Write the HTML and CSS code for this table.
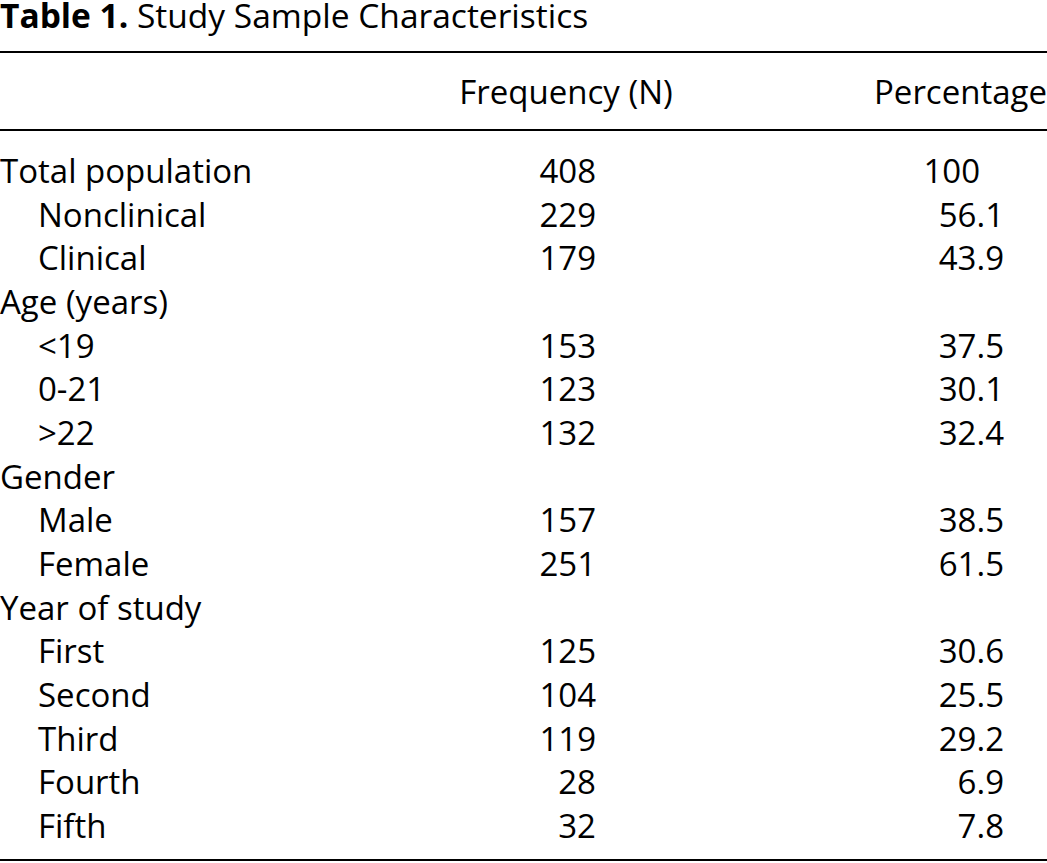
FILE: index.html
```html
<!DOCTYPE html>
<html>
<head>
<meta charset="utf-8">
<link rel="stylesheet" href="styles.css">
</head>
<body>
<div class="page">
  <div class="caption"><span class="label">Table 1.</span> Study Sample Characteristics</div>
  <table class="tbl">
    <thead>
      <tr><th class="c-name"></th><th class="c-freq">Frequency (N)</th><th class="c-pct">Percentage</th></tr>
    </thead>
    <tbody>
      <tr class="first"><td>Total population</td><td class="n">408</td><td class="p int">100</td></tr>
      <tr><td class="sub">Nonclinical</td><td class="n">229</td><td class="p">56.1</td></tr>
      <tr><td class="sub">Clinical</td><td class="n">179</td><td class="p">43.9</td></tr>
      <tr><td>Age (years)</td><td></td><td></td></tr>
      <tr><td class="sub">&lt;19</td><td class="n">153</td><td class="p">37.5</td></tr>
      <tr><td class="sub">0-21</td><td class="n">123</td><td class="p">30.1</td></tr>
      <tr><td class="sub">&gt;22</td><td class="n">132</td><td class="p">32.4</td></tr>
      <tr><td>Gender</td><td></td><td></td></tr>
      <tr><td class="sub">Male</td><td class="n">157</td><td class="p">38.5</td></tr>
      <tr><td class="sub">Female</td><td class="n">251</td><td class="p">61.5</td></tr>
      <tr><td>Year of study</td><td></td><td></td></tr>
      <tr><td class="sub">First</td><td class="n">125</td><td class="p">30.6</td></tr>
      <tr><td class="sub">Second</td><td class="n">104</td><td class="p">25.5</td></tr>
      <tr><td class="sub">Third</td><td class="n">119</td><td class="p">29.2</td></tr>
      <tr><td class="sub">Fourth</td><td class="n">28</td><td class="p">6.9</td></tr>
      <tr class="last"><td class="sub">Fifth</td><td class="n">32</td><td class="p">7.8</td></tr>
    </tbody>
  </table>
</div>
</body>
</html>
```
FILE: styles.css
```css
html, body {
  margin: 0;
  padding: 0;
  background: #fff;
}
body {
  font-family: "Open Sans", Lato, "Liberation Sans", sans-serif;
  color: #000;
}
.page {
  width: 1047px;
}
.caption {
  font-size: 33.5px;
  line-height: 30px;
  padding-top: 0;
  height: 51px;
  white-space: nowrap;
}
.caption .label {
  font-weight: 700;
}
.tbl {
  width: 1047px;
  border-collapse: collapse;
  font-size: 33px;
  border-top: 2px solid #000;
  border-bottom: 2px solid #000;
}
.tbl th {
  font-weight: 400;
  height: 76px;
  padding: 0;
  border-bottom: 2px solid #000;
  vertical-align: middle;
}
.tbl td {
  padding: 0;
  height: 43.67px;
  line-height: 43.67px;
  white-space: nowrap;
}
.c-name { width: 440px; }
.c-freq { width: 252px; text-align: center; }
.c-pct { text-align: right; }
.sub { padding-left: 38px !important; }
.n { text-align: right; padding-right: 96px !important; }
.p { text-align: right; padding-right: 43px !important; }
.p.int { padding-right: 67px !important; }
.first td { padding-top: 18px !important; }
.last td { padding-bottom: 11px !important; }
```
